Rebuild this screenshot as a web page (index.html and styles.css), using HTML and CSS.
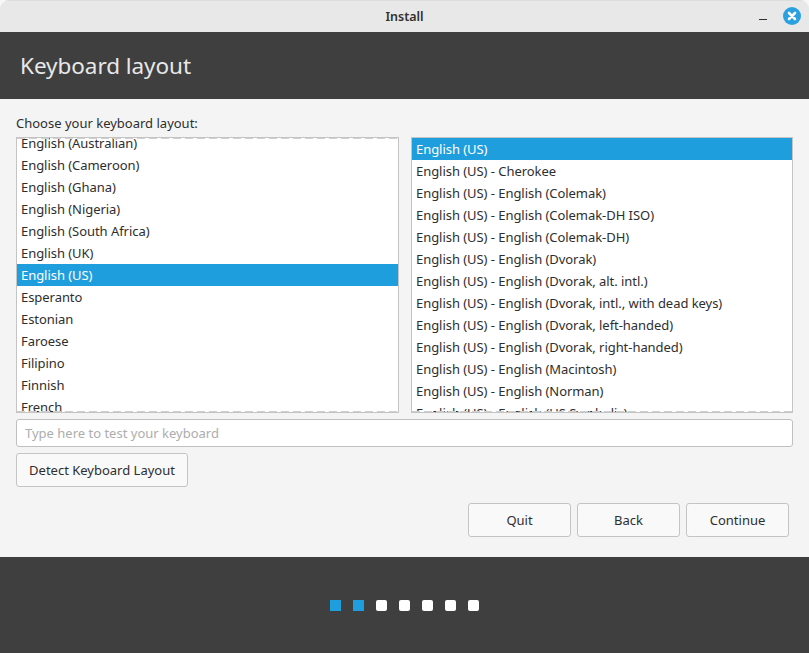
FILE: index.html
```html
<!DOCTYPE html>
<html lang="en">
<head>
<meta charset="utf-8">
<title>Install</title>
<link rel="stylesheet" href="styles.css">
</head>
<body>
<div class="window">
  <div class="titlebar">
    <span class="title">Install</span>
    <div class="controls">
      <svg class="min" width="10" height="10" viewBox="0 0 10 10"><path d="M1 7.5h8" stroke="#2e2e2e" stroke-width="1"/></svg>
      <svg class="close" width="18" height="18" viewBox="0 0 18 18"><circle cx="9" cy="9" r="9" fill="#2ba0e0"/><path d="M6 6l6 6M12 6l-6 6" stroke="#fff" stroke-width="2.6" stroke-linecap="round"/></svg>
    </div>
  </div>
  <header class="banner"><h1>Keyboard layout</h1></header>
  <main class="content">
    <label class="prompt">Choose your keyboard layout:</label>
    <div class="lists">
      <div class="list overshoot-top left">
        <div class="rows shifted">
          <div class="row">English (Australian)</div>
          <div class="row">English (Cameroon)</div>
          <div class="row">English (Ghana)</div>
          <div class="row">English (Nigeria)</div>
          <div class="row">English (South Africa)</div>
          <div class="row">English (UK)</div>
          <div class="row selected">English (US)</div>
          <div class="row">Esperanto</div>
          <div class="row">Estonian</div>
          <div class="row">Faroese</div>
          <div class="row">Filipino</div>
          <div class="row">Finnish</div>
          <div class="row">French</div>
        </div>
      </div>
      <div class="list right">
        <div class="rows">
          <div class="row selected">English (US)</div>
          <div class="row">English (US) - Cherokee</div>
          <div class="row">English (US) - English (Colemak)</div>
          <div class="row">English (US) - English (Colemak-DH ISO)</div>
          <div class="row">English (US) - English (Colemak-DH)</div>
          <div class="row">English (US) - English (Dvorak)</div>
          <div class="row">English (US) - English (Dvorak, alt. intl.)</div>
          <div class="row">English (US) - English (Dvorak, intl., with dead keys)</div>
          <div class="row">English (US) - English (Dvorak, left-handed)</div>
          <div class="row">English (US) - English (Dvorak, right-handed)</div>
          <div class="row">English (US) - English (Macintosh)</div>
          <div class="row">English (US) - English (Norman)</div>
          <div class="row">English (US) - English (US Symbolic)</div>
        </div>
      </div>
    </div>
    <input class="test" type="text" placeholder="Type here to test your keyboard">
    <button class="btn detect">Detect Keyboard Layout</button>
    <div class="actions">
      <button class="btn action">Quit</button>
      <button class="btn action">Back</button>
      <button class="btn action">Continue</button>
    </div>
  </main>
  <footer class="footer">
    <div class="dots">
      <span class="dot on"></span><span class="dot on"></span><span class="dot"></span><span class="dot"></span><span class="dot"></span><span class="dot"></span><span class="dot"></span>
    </div>
  </footer>
</div>
</body>
</html>
```
FILE: styles.css
```css
* { box-sizing: border-box; }
html, body { margin: 0; height: 100%; background: #f8f8f8; }
body { font-family: "Noto Sans", "Open Sans", sans-serif; font-size: 13px; color: #2e2e2e; overflow: hidden; }
.window { width: 809px; height: 653px; display: flex; flex-direction: column; border-radius: 9px 9px 0 0; overflow: hidden; background: #f4f4f4; }
.titlebar { height: 32px; flex: none; background: #e8e8e8; border-top: 1px solid #dcdcdc; display: flex; align-items: center; justify-content: center; position: relative; }
.title { font-weight: 600; font-size: 12.5px; color: #303030; }
.controls { position: absolute; right: 8px; top: 6px; display: flex; align-items: center; gap: 15px; }
.min { display: block; margin-top: 1px; }
.close { display: block; }
.banner { height: 67px; flex: none; background: #3f3f3f; display: flex; align-items: center; padding-left: 20px; }
.banner h1 { margin: 0; font-size: 22.5px; font-weight: 400; letter-spacing: -0.05px; color: #e8e8e8; }
.content { flex: 1; display: flex; flex-direction: column; padding: 16px 16px 0; min-height: 0; }
.prompt { display: block; height: 22px; line-height: 17px; }
.lists { display: flex; gap: 12px; height: 276px; }
.list { flex: 1; min-width: 0; background: #fff; border: 1px solid #c4c4c4; overflow: hidden; position: relative; }
.left { flex: 0 0 383px; }
.right { flex: 0 0 382px; }
.shifted { margin-top: -6px; }
.row { height: 22px; line-height: 22px; padding-left: 4px; white-space: nowrap; letter-spacing: -0.05px; }
.selected { background: #1f9ede; color: #fff; }
.list::after, .overshoot-top::before { content: ""; position: absolute; left: 0; right: 0; height: 1px; background: repeating-linear-gradient(90deg, #cfcfcf 0 8px, transparent 8px 12px); }
.list::after { bottom: 0; }
.overshoot-top::before { top: 0; }
.test { display: block; width: 100%; height: 28px; margin-top: 6px; padding: 0 8px; border: 1px solid #c0c0c0; border-radius: 3px; background: #fff; font: inherit; color: #2e2e2e; outline: none; }
.test::placeholder { color: #adadad; opacity: 1; }
.btn { font: inherit; color: #2e2e2e; background: #f9f9f9; border: 1px solid #c4c4c4; border-radius: 3px; padding: 0; }
.detect { width: 172px; height: 34px; margin-top: 6px; }
.actions { display: flex; justify-content: flex-end; gap: 6px; margin-top: 16px; padding-right: 4px; }
.action { width: 103px; height: 34px; }
.footer { height: 96px; flex: none; background: #3f3f3f; display: flex; justify-content: center; padding-top: 43px; }
.dots { display: flex; gap: 12px; height: 11px; }
.dot { width: 11px; height: 11px; background: #fff; border-radius: 2px; }
.dot.on { background: #1f9ede; border-radius: 0; }
```
